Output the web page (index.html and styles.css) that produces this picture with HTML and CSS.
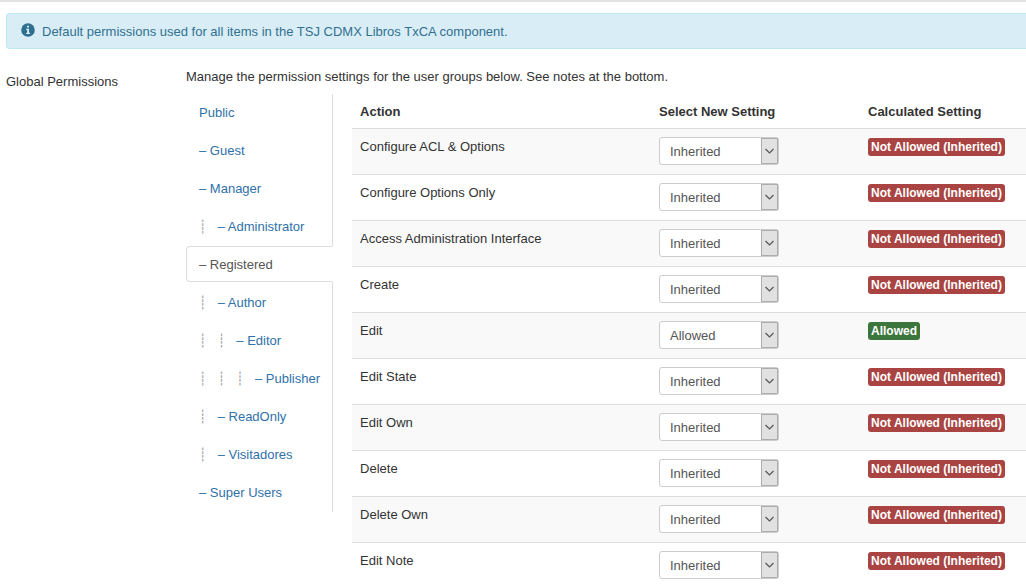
FILE: index.html
```
<!DOCTYPE html>
<html lang="en">
<head>
<meta charset="utf-8">
<title>Permissions</title>
<link rel="stylesheet" href="styles.css">
</head>
<body>
<main class="page">
  <div class="alert">
    <svg class="alert-icon" viewBox="0 0 14 14" aria-hidden="true"><circle cx="7" cy="7" r="6.8" fill="#2f6f8f"/><path d="M6 2.800h2v1.800H6zM5.200 5.800H8v4h1v1.200H5.200V9.800h1V7h-1z" fill="#d9edf7"/></svg>
    <span>Default permissions used for all items in the TSJ CDMX Libros TxCA component.</span>
  </div>
  <section class="control-group">
    <div class="control-label">Global Permissions</div>
    <div class="controls">
      <p class="intro">Manage the permission settings for the user groups below. See notes at the bottom.</p>
      <div class="tabs">
        <nav class="groups" id="groups"></nav>
        <table class="permissions">
          <thead>
            <tr><th>Action</th><th class="col-setting">Select New Setting</th><th class="col-calculated">Calculated Setting</th></tr>
          </thead>
          <tbody id="rows"></tbody>
        </table>
      </div>
    </div>
  </section>
</main>
<script src="app.js"></script>
</body>
</html>
```
FILE: styles.css
```
* { box-sizing: border-box; }

html { overflow: hidden auto; scrollbar-width: none; }

body {
  margin: 0;
  background: #fff;
  color: #333;
  font: 13px/18px "Liberation Sans", Arial, "DejaVu Sans Mono", sans-serif;
}

.page {
  border-top: 2px solid #e2e2e2;
  padding: 11px 0 0 6px;
}

.alert {
  display: flex;
  align-items: flex-start;
  gap: 7px;
  margin-bottom: 19px;
  padding: 9px 14px 7px;
  border: 1px solid #bce8f1;
  border-right: 0;
  border-radius: 4px 0 0 4px;
  background: #d9edf7;
  color: #31708f;
}

.alert-icon { width: 14px; height: 14px; }

.control-group { display: flex; }
.control-label { flex: 0 0 180px; padding-top: 5px; }
.controls { flex: 1; min-width: 0; }
.intro { margin: 0 0 8px; }
.tabs { display: flex; align-items: flex-start; gap: 19px; }

.groups {
  display: flex;
  flex: 0 0 147px;
  flex-direction: column;
  gap: 2px;
  padding-bottom: 2px;
  border-right: 1px solid #ddd;
}

.group {
  margin-right: -1px;
  padding: 9px 12px 7px;
  border: 1px solid transparent;
  border-radius: 4px 0 0 4px;
  color: #3071a9;
  text-decoration: none;
  white-space: pre;
}

.group.active {
  border-color: #ddd;
  border-right-color: #fff;
  background: #fff;
  color: #555;
}

.guide { color: #999; }

.permissions {
  flex: 1;
  min-width: 0;
  border-collapse: separate;
  border-spacing: 0;
  table-layout: fixed;
}

.permissions th, .permissions td {
  padding: 8px;
  text-align: left;
  vertical-align: top;
}

.permissions th, .permissions td:first-child { padding: 9px 8px 7px; }

.permissions td { border-top: 1px solid #ddd; }
.permissions tbody tr:nth-child(odd) { background: #f9f9f9; }
.col-setting { width: 209px; }
.col-calculated { width: 166px; }

.select {
  position: relative;
  display: block;
  width: 120px;
  margin-bottom: 1px;
}

.select select {
  display: block;
  width: 100%;
  height: 28px;
  padding: 2px 20px 0 10px;
  border: 1px solid #ccc;
  border-radius: 3px;
  appearance: none;
  background: #fff;
  color: #555;
  font: inherit;
}

.select svg {
  position: absolute;
  top: 0;
  right: 0;
  width: 18px;
  height: 28px;
  pointer-events: none;
}

.label {
  display: inline-block;
  margin-top: 1px;
  padding: 2px 3px;
  border-radius: 3px;
  background: #a94442;
  color: #fff;
  font-size: 12px;
  font-weight: bold;
  line-height: 14px;
  vertical-align: top;
  white-space: nowrap;
}

.label.allowed { background: #3c763d; }
```
FILE: app.js
```
const groups = [
  ["Public", -1], ["Guest", 0], ["Manager", 0], ["Administrator", 1],
  ["Registered", 0], ["Author", 1], ["Editor", 2], ["Publisher", 3],
  ["ReadOnly", 1], ["Visitadores", 1], ["Super Users", 0]
];
const actions = [
  "Configure ACL & Options", "Configure Options Only", "Access Administration Interface",
  "Create", "Edit", "Edit State", "Edit Own", "Delete", "Delete Own", "Edit Note"
];

document.getElementById("groups").innerHTML = groups.map(([name, level]) => {
  const guide = level > 0 ? `<span class="guide">${"┊\u00a0\u00a0\u00a0".repeat(level)}</span>` : "";
  const active = name === "Registered" ? ' active" aria-current="true' : "";
  return `<a href="#" class="group${active}">${guide}${level < 0 ? "" : "– "}${name}</a>`;
}).join("");

document.getElementById("rows").innerHTML = actions.map((action, i) => {
  const allowed = action === "Edit";
  const text = action.replace("&", "&amp;");
  return `<tr>
    <td><label for="setting-${i}">${text}</label></td>
    <td><span class="select">
      <select id="setting-${i}">
        <option${allowed ? "" : " selected"}>Inherited</option>
        <option${allowed ? " selected" : ""}>Allowed</option>
        <option>Denied</option>
      </select>
      <svg viewBox="0 0 18 28" aria-hidden="true"><rect x=".5" y="1.500" width="16" height="25" fill="#e1e1e1" stroke="#adadad"/><path d="M4.500 12l4 4 4-4" fill="none" stroke="#555" stroke-width="1.200"/></svg>
    </span></td>
    <td><span class="label${allowed ? " allowed" : ""}">${allowed ? "Allowed" : "Not Allowed (Inherited)"}</span></td>
  </tr>`;
}).join("");
```
